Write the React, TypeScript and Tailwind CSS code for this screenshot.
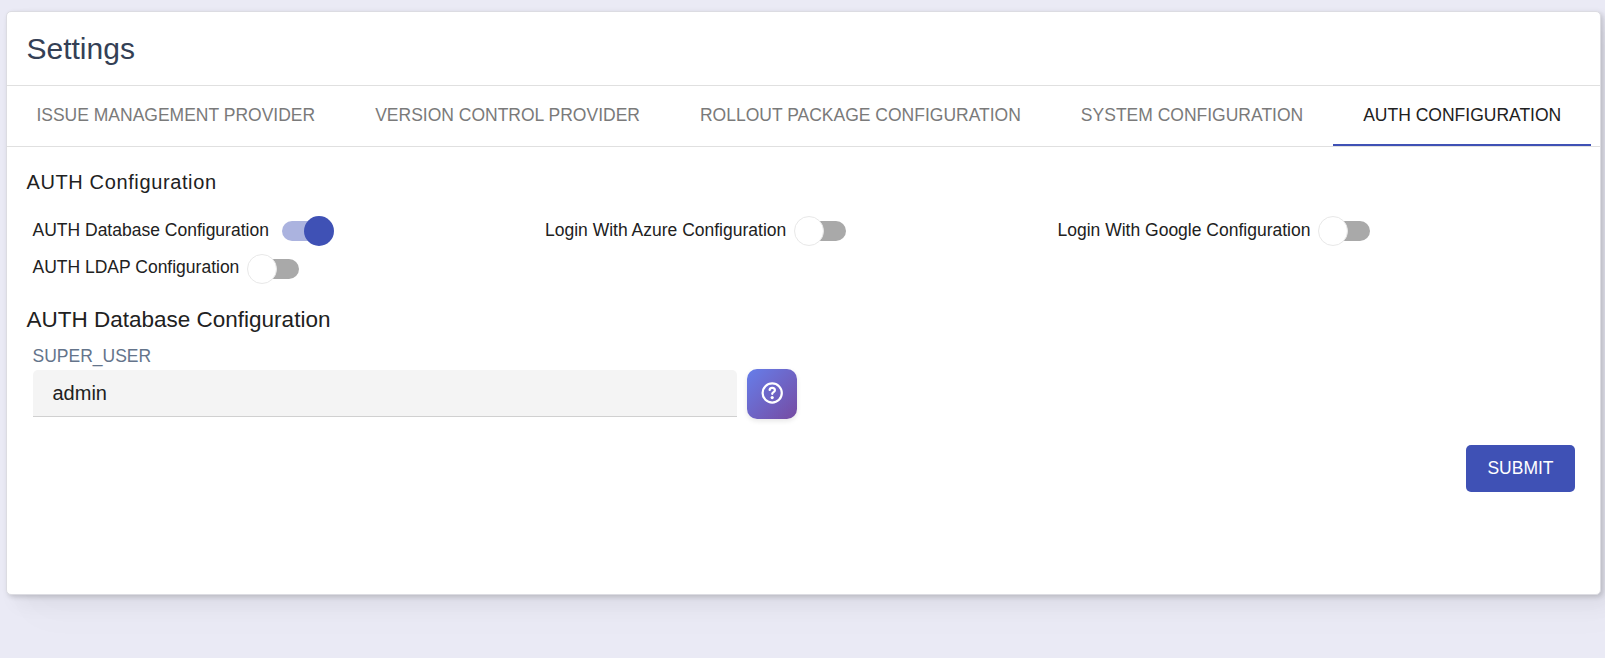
const tabs = [
  'ISSUE MANAGEMENT PROVIDER',
  'VERSION CONTROL PROVIDER',
  'ROLLOUT PACKAGE CONFIGURATION',
  'SYSTEM CONFIGURATION',
  'AUTH CONFIGURATION',
];

const options = [
  { label: 'AUTH Database Configuration', on: true, leading: 'leading-[28px]' },
  { label: 'Login With Azure Configuration', on: false, leading: 'leading-[28px]' },
  { label: 'Login With Google Configuration', on: false, leading: 'leading-[28px]' },
  { label: 'AUTH LDAP Configuration', on: false, leading: 'leading-[26px]' },
];

function Toggle({ on }: { on: boolean }) {
  return (
    <span
      role="switch"
      aria-checked={on}
      className={`relative mt-[5px] block h-5 w-[45px] rounded-full ${on ? 'ml-[13px] bg-[#abb3df]' : 'ml-[15px] bg-[#a9a9a9]'}`}
    >
      <span
        className={`absolute -top-[5px] size-[30px] rounded-full ${on ? '-right-[7px] bg-[#3f51b5]' : '-left-[7.5px] border border-[#e8e8e8] bg-white'}`}
      />
    </span>
  );
}

export default function App() {
  return (
    <div className="h-[658px] overflow-hidden bg-[#eaeaf5] pt-[11px] pr-1 pl-1.5 font-['Liberation_Sans',Arial,sans-serif] text-[17.5px] text-[#212121]">
      <main className="h-[584px] rounded-[5px] border border-[#dcdce2] bg-white shadow-[2px_2px_5px_rgba(0,0,0,0.16),10px_10px_20px_rgba(0,0,0,0.05),22px_22px_40px_rgba(0,0,0,0.02)]">
        <header className="flex h-[74px] items-center border-b border-[#e0e0e0] px-[19.5px]">
          <h1 className="text-[30px] leading-[38px] text-[#344055]">Settings</h1>
        </header>
        <nav className="flex h-[61px] border-b border-[#e0e0e0]">
          {tabs.map((tab, i) => (
            <button
              key={tab}
              className={`h-[60px] whitespace-nowrap ${i === 0 ? 'pr-[30px] pl-[29.4px]' : 'px-[30px]'} ${i === 4 ? 'border-b-2 border-[#3f51b5] text-[#212121]' : 'pb-0.5 text-[#7a7a7a]'} ${i === 4 ? 'pt-px' : ''}`}
            >
              {tab}
            </button>
          ))}
        </nav>
        <section className="pt-5 pr-5 pl-[19.5px]">
          <h2 className="text-xl leading-[30px] tracking-[0.62px]">AUTH Configuration</h2>
          <div className="mt-[19px] ml-1.5 grid grid-cols-[512.5px_512.5px_1fr] gap-y-2">
            {options.map((o) => (
              <div key={o.label} className="flex h-[30px]">
                <span className={`whitespace-nowrap ${o.leading}`}>{o.label}</span>
                <Toggle on={o.on} />
              </div>
            ))}
          </div>
          <h3 className="mt-[21px] text-[22.5px] leading-[30px]">AUTH Database Configuration</h3>
          <div className="mt-1.5 ml-1.5">
            <label className="block h-[28px] leading-[30px] text-[#64748b]">SUPER_USER</label>
            <div className="flex items-start gap-2.5">
              <div className="mt-px flex h-[47px] w-[704px] items-center rounded-t-[5px] border-b border-[#d0d0d0] bg-[#f4f4f4] px-5 text-xl">
                admin
              </div>
              <button className="flex size-[50px] items-center justify-center rounded-[10px] bg-[linear-gradient(135deg,#667eea,#764ba2)] pb-[1.4px] text-white shadow-[0_2px_5px_rgba(0,0,0,0.1)]">
                <svg width="22" height="22" viewBox="0 0 22 22" fill="none">
                  <circle cx="11.2" cy="11" r="9.6" stroke="currentColor" strokeWidth="2.2" />
                  <path
                    d="M8.6 8C8.8 6.5 9.9 5.9 11.2 5.9c1.5 0 2.7.9 2.7 2.4 0 1.8-2.6 1.9-2.7 3.6"
                    stroke="currentColor"
                    strokeWidth="2.2"
                    strokeLinecap="round"
                    strokeLinejoin="round"
                  />
                  <circle cx="11.2" cy="15.6" r="1.6" fill="currentColor" />
                </svg>
              </button>
            </div>
          </div>
          <div className="mt-[26px] flex justify-end pr-[5px]">
            <button className="h-[47px] w-[109px] rounded-[5px] bg-[#3f51b5] text-white">SUBMIT</button>
          </div>
        </section>
      </main>
    </div>
  );
}
